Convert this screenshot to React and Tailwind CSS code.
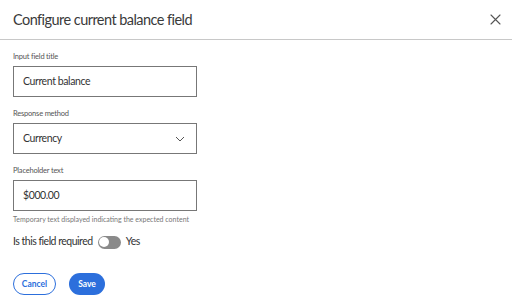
import React from "react";

export default function App() {
  return (
    <div className="w-[512px] h-[308px] bg-white text-[#333] overflow-hidden" style={{ fontFamily: "Lato, 'Noto Sans', sans-serif" }}>
      <div className="h-[40px] flex items-center justify-between pl-[13px] pr-[11px] border-b border-[#c8c8c8]">
        <h1 className="text-[14.5px] tracking-[-0.55px] leading-none text-[#3a3a3a] pt-[1px]">Configure current balance field</h1>
        <svg width="11" height="11" viewBox="0 0 11 11">
          <path d="M1 1 L10 10 M10 1 L1 10" stroke="#555" strokeWidth="1.1" strokeLinecap="round" />
        </svg>
      </div>
      <div className="pl-[13px] pt-[12px] flex flex-col">
        <label className="text-[7.5px] tracking-[-0.2px] leading-[10px] text-[#555]">Input field title</label>
        <div className="mt-[4px] w-[184px] h-[31px] border border-[#777] flex items-center pl-[9px] text-[10.5px] tracking-[-0.4px]">Current balance</div>
        <label className="mt-[12px] text-[7.5px] tracking-[-0.2px] leading-[10px] text-[#555]">Response method</label>
        <div className="mt-[4px] w-[184px] h-[31px] border border-[#777] flex items-center justify-between pl-[9px] pr-[11px] text-[10.5px] tracking-[-0.4px]">
          <span>Currency</span>
          <svg width="10" height="6" viewBox="0 0 10 6">
            <path d="M1 1 L5 5 L9 1" stroke="#555" strokeWidth="1" fill="none" />
          </svg>
        </div>
        <label className="mt-[12px] text-[7.5px] tracking-[-0.2px] leading-[10px] text-[#555]">Placeholder text</label>
        <div className="mt-[4px] w-[184px] h-[31px] border border-[#777] flex items-center pl-[9px] text-[10.5px] tracking-[-0.4px]">$000.00</div>
        <p className="mt-[3px] text-[7px] leading-[10px] text-[#777]">Temporary text displayed indicating the expected content</p>
        <div className="mt-[11px] flex items-center h-[14px]">
          <span className="text-[10.5px] tracking-[-0.5px] text-[#333]">Is this field required</span>
          <div className="ml-[5px] w-[23px] h-[13px] rounded-full bg-[#8a8a8a] flex items-center pl-[1.5px]">
            <div className="w-[10px] h-[10px] rounded-full bg-white" />
          </div>
          <span className="ml-[5px] text-[10.5px] tracking-[-0.4px] text-[#333]">Yes</span>
        </div>
        <div className="mt-[24px] flex items-center gap-[13px]">
          <button className="w-[43px] h-[22px] rounded-full border border-[#2c6fdc] text-[#2c6fdc] text-[8.5px] font-bold">Cancel</button>
          <button className="w-[36px] h-[22px] rounded-full bg-[#2c6fdc] text-white text-[8.5px] font-bold">Save</button>
        </div>
      </div>
    </div>
  );
}
